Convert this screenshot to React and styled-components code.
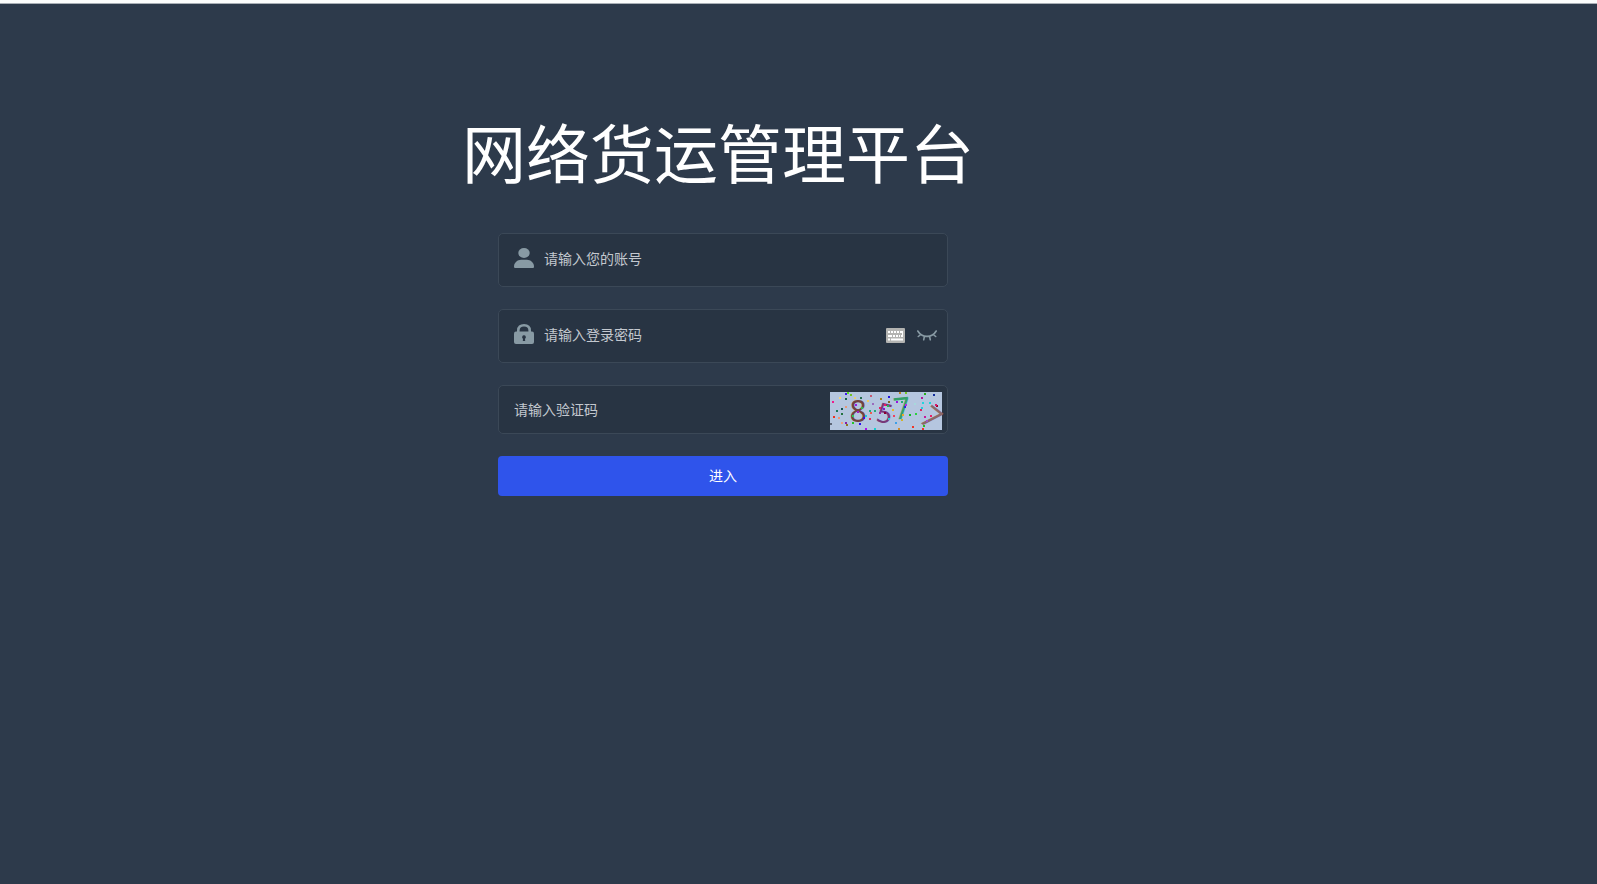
import React, { useState } from 'react';
import styled, { createGlobalStyle } from 'styled-components';

const GlobalStyle = createGlobalStyle`
  body {
    margin: 0;
    background-color: #2d3a4b;
    font-family: 'Noto Sans CJK SC', 'Liberation Sans', sans-serif;
  }
`;

// Page: full-height dark background with the light strip on top
const Page = styled.div`
  display: flex;
  flex-direction: column;
  align-items: center;
  box-sizing: border-box;
  min-height: 100vh;
  padding: 101px 151px 40px 0;
  border-top: 3px solid #fcfdfd;
  background-color: #2d3a4b;
  box-shadow: inset 0 1px 0 #a9afb6;
`;

const Title = styled.h1`
  margin: 0 0 37px;
  padding-right: 10px;
  font-size: 64px;
  font-weight: 400;
  line-height: 92px;
  color: #fff;
  white-space: nowrap;
`;

const Form = styled.form`
  display: flex;
  flex-direction: column;
  gap: 22px;
  width: 100%;
  max-width: 450px;
`;

// Field: bordered row that holds icon, input and the tools on the right
const Field = styled.div`
  display: flex;
  align-items: center;
  box-sizing: border-box;
  height: ${(props) => (props.$compact ? '49px' : '54px')};
  padding: ${(props) => (props.$compact ? '0 5px 0 15px' : '0 10px 2px 15px')};
  border: 1px solid #3b4857;
  border-radius: 5px;
  background-color: #283443;
`;

const FieldIcon = styled.label`
  display: flex;
  margin-right: 10px;
  padding-bottom: 2px;
  color: #889aa4;
`;

const Input = styled.input`
  flex: 1;
  align-self: stretch;
  min-width: 0;
  padding: 0 0 2px;
  border: 0;
  outline: none;
  background: transparent;
  color: #fff;
  font-family: inherit;
  font-size: 14px;

  &::placeholder {
    color: #c3c8cf;
    opacity: 1;
  }
`;

const IconButton = styled.button`
  display: flex;
  margin-left: 12px;
  padding: 0;
  border: 0;
  background: none;
  color: #889aa4;
  cursor: pointer;
`;

const CaptchaButton = styled(IconButton)`
  margin-left: 10px;
  padding-top: 2px;
`;

const CaptchaSvg = styled.svg`
  overflow: visible;
  font-family: 'Noto Sans', sans-serif;
  font-size: 30px;
  text-anchor: middle;
`;

const SubmitButton = styled.button`
  height: 40px;
  padding: 0 0 2px;
  border: 0;
  border-radius: 4px;
  background-color: #2f54eb;
  color: #fff;
  font-family: inherit;
  font-size: 14px;
  cursor: pointer;

  &:hover {
    background-color: #4a6bf0;
  }
`;

const UserIcon = () => (
  <svg width="20" height="20" viewBox="0 0 20 20" fill="currentColor" aria-hidden="true">
    <ellipse cx="10" cy="5" rx="5.7" ry="5" />
    <path d="M0 18.500C0 14.500 3.600 11.700 7 11.700h6c3.400 0 7 2.800 7 6.800 0 1-.5 1.500-1.500 1.500h-17C.5 20 0 19.500 0 18.500z" />
  </svg>
);

const LockIcon = () => (
  <svg width="20" height="20" viewBox="0 0 20 20" aria-hidden="true">
    <path d="M4.300 8V6.500C4.300 3 6.500 1.300 10 1.300s5.700 1.700 5.700 5.200V8" fill="none" stroke="currentColor" strokeWidth="2.600" />
    <rect y="7.500" width="20" height="12.500" rx="2" fill="currentColor" />
    <path d="M10 11.300a1.900 1.900 0 0 1 1 3.500l.2 2.300H8.800l.2-2.300a1.900 1.900 0 0 1 1-3.500z" fill="#283443" />
  </svg>
);

const KeyboardIcon = () => (
  <svg width="19" height="15" viewBox="0 0 19 15" aria-hidden="true">
    <rect width="19" height="15" rx="1" fill="#b3b3b1" />
    <path
      d="M2 4h2M5 4h2M8 4h2M11 4h2M14 4h3M2 8h4M7 8h2M10 8h2M13 8h1M15 8h2M2 11.500h2M5 11.500h12"
      stroke="#fff"
      strokeWidth="2"
    />
    <path d="M16.500 4v5" stroke="#fff" strokeWidth="1" />
  </svg>
);

const EyeClosedIcon = () => (
  <svg width="20" height="11" viewBox="0 0 20 11" fill="none" stroke="currentColor" strokeWidth="1.600" strokeLinecap="round" aria-hidden="true">
    <path d="M.8 1C5 8.200 15 8.200 19.200 1M3.800 4.500 1.300 6.500M7.400 6.400 6.700 9.800M12.600 6.400l.7 3.400M16.200 4.500l2.500 2" />
  </svg>
);

// Noise dots of the captcha: x, y, colour
const DOTS = [
  [9, 5, '#f2d67a'], [15, 1, '#4418ee'], [17, 0, '#58e01c'], [20, 2, '#70c022'], [2, 9, '#ee1c8c'],
  [15, 6, '#1c604c'], [24, 5, '#e6cf78'], [30, 5, '#236c50'], [40, 3, '#c65a72'], [37, 8, '#f0c860'],
  [15, 14, '#e89a78'], [11, 16, '#155450'], [25, 12, '#a01ce0'], [6, 18, '#1b7656'], [11, 21, '#23723f'],
  [3, 24, '#ee321e'], [8, 25, '#f29270'], [0, 31, '#5c6576'], [11, 30, '#f0a080'], [15, 30, '#8a1ea8'],
  [16, 32, '#8c791e'], [22, 30, '#25c62a'], [29, 31, '#2b10ee'], [35, 36, '#ac10ee'], [39, 26, '#e02a60'],
  [40, 20, '#ef5d4e'], [39, 18, '#1dae86'], [44, 18, '#29aa78'], [42, 11, '#9a6cbd'], [50, 6, '#a4801d'],
  [58, 4, '#2010de'], [58, 9, '#806820'], [54, 12, '#ee1c64'], [49, 15, '#e02660'], [53, 16, '#8119cc'],
  [49, 20, '#9b2da0'], [54, 20, '#8c0030'], [62, 17, '#e8b82a'], [63, 23, '#ee4260'], [58, 26, '#2aced0'],
  [65, 30, '#3c9fe8'], [68, 36, '#d08a2a'], [44, 36, '#14d0d0'], [66, 9, '#9a10e0'], [69, 0, '#bd8627'],
  [75, 0, '#76c828'], [71, 9, '#21ac78'], [74, 14, '#2a28de'], [75, 12, '#b62be0'], [79, 22, '#12bd25'],
  [72, 22, '#f0a52a'], [71, 27, '#d1b22a'], [85, 21, '#2bcf40'], [91, 5, '#ad1995'], [94, 1, '#2bad1c'],
  [103, 2, '#122d9e'], [92, 10, '#22d5df'], [91, 15, '#21cfe0'], [99, 10, '#20d1d6'], [106, 13, '#a00026'],
  [105, 12, '#db196a'], [90, 17, '#de285e'], [100, 23, '#ee1c66'], [94, 24, '#c61c99'], [96, 28, '#9a58c4'],
  [82, 34, '#ef3727'], [92, 36, '#f03328'], [93, 33, '#31bb20'], [84, 11, '#a7d8db'], [27, 19, '#a01cc0'],
  [31, 15, '#34bd48'], [33, 25, '#3d10e0'], [22, 23, '#2acc5a'], [35, 23, '#14c8e2'], [57, 13, '#24b957'],
];

const CaptchaImage = () => (
  <CaptchaSvg width="112" height="38" viewBox="0 0 112 38" role="img" aria-label="验证码">
    <rect width="112" height="38" fill="#b5c6df" />
    <text x="28" y="30" fill="#70433f">8</text>
    <text x="55" y="31" fontSize="27" fill="#783878" transform="rotate(14 55 21)">5</text>
    <text x="72" y="27" fill="#35a06a" transform="rotate(-6 72 17)">7</text>
    <text x="100" y="36" fill="#8c6868" transform="rotate(38 100 27)">7</text>
    {DOTS.map(([x, y, color]) => (
      <rect key={`${x}-${y}`} x={x} y={y} width="2" height="2" fill={color} />
    ))}
  </CaptchaSvg>
);

const App = () => {
  const [form, setForm] = useState({ username: '', password: '', code: '' });
  const [isPasswordVisible, setIsPasswordVisible] = useState(false);

  const handleChange = (e) => setForm({ ...form, [e.target.name]: e.target.value });

  return (
    <Page>
      <GlobalStyle />
      <Title>网络货运管理平台</Title>
      <Form onSubmit={(e) => e.preventDefault()}>
        <Field>
          <FieldIcon htmlFor="username" aria-label="账号"><UserIcon /></FieldIcon>
          <Input
            id="username"
            name="username"
            type="text"
            placeholder="请输入您的账号"
            value={form.username}
            onChange={handleChange}
          />
        </Field>
        <Field>
          <FieldIcon htmlFor="password" aria-label="密码"><LockIcon /></FieldIcon>
          <Input
            id="password"
            name="password"
            type={isPasswordVisible ? 'text' : 'password'}
            placeholder="请输入登录密码"
            value={form.password}
            onChange={handleChange}
          />
          <IconButton type="button" aria-label="软键盘"><KeyboardIcon /></IconButton>
          <IconButton type="button" aria-label="显示密码" onClick={() => setIsPasswordVisible(!isPasswordVisible)}>
            <EyeClosedIcon />
          </IconButton>
        </Field>
        <Field $compact>
          <Input
            name="code"
            type="text"
            aria-label="验证码"
            placeholder="请输入验证码"
            value={form.code}
            onChange={handleChange}
          />
          <CaptchaButton type="button" aria-label="刷新验证码"><CaptchaImage /></CaptchaButton>
        </Field>
        <SubmitButton type="submit">进入</SubmitButton>
      </Form>
    </Page>
  );
};

export default App;
